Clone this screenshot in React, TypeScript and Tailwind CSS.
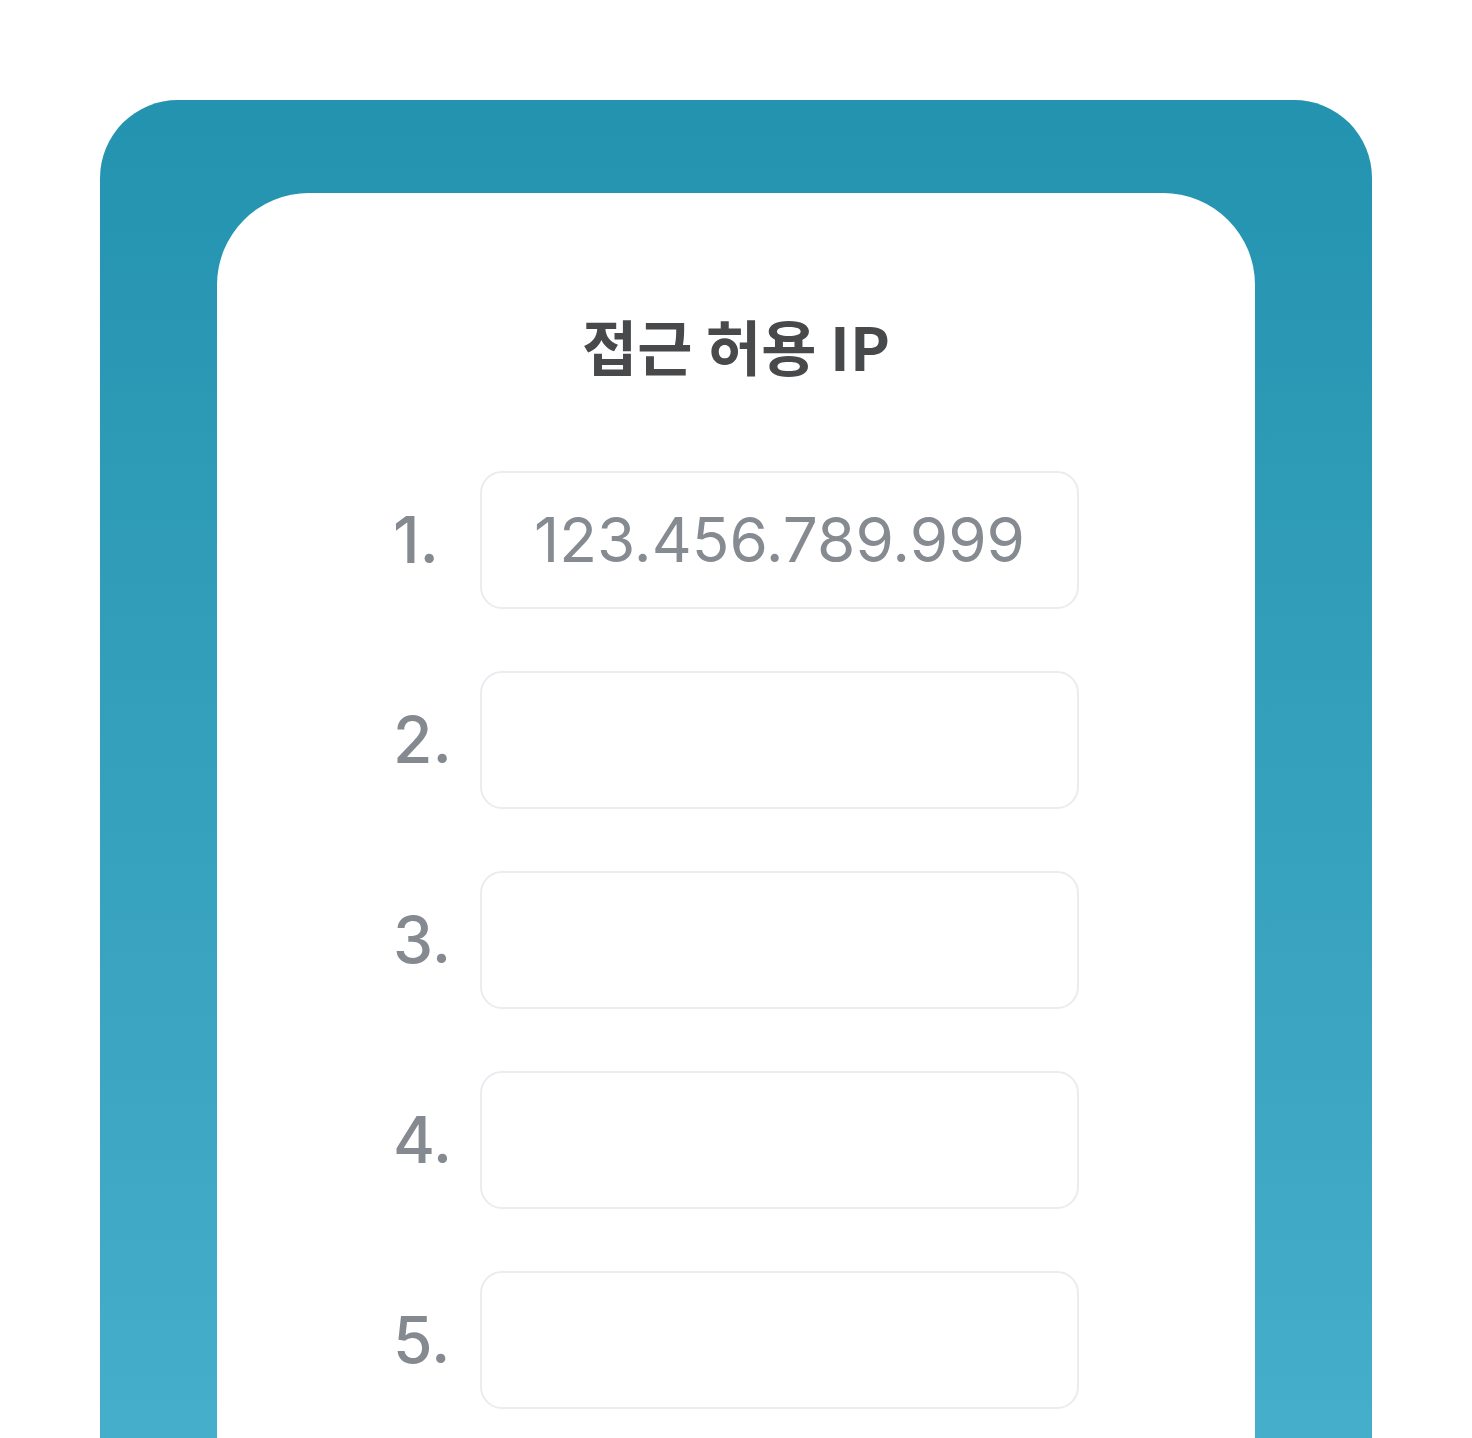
import React from "react";

const ips = ["123.456.789.999", "", "", "", ""];

export default function App() {
  return (
    <div className="h-[1438px] w-full overflow-hidden bg-white px-[100px] pt-[100px]">
      <div className="h-[1338px] rounded-t-[78px] bg-gradient-to-b from-[#2393af] to-[#45aeca] px-[117px] pt-[93px]">
        <div className="flex h-full flex-col items-center rounded-t-[92px] bg-white pt-[112px]">
          <h1
            className="text-[60px] font-bold leading-[80px] text-[#48494b]"
            style={{ fontFamily: "'Noto Sans CJK KR', 'Noto Sans', sans-serif" }}
          >
            접근 허용 IP
          </h1>
          <ul className="mt-[86px] flex flex-col gap-[62px]" style={{ fontFamily: "Inter, 'Noto Sans', sans-serif" }}>
            {ips.map((ip, idx) => (
              <li key={idx} className="flex items-center">
                <span className="w-[87px] text-[64px] font-medium leading-none text-[#858a91]">{idx + 1}.</span>
                <div className="flex h-[138px] w-[599px] items-center justify-center rounded-[22px] border-2 border-[#ebecf0] text-[62px] leading-none text-[#868b92]">
                  {ip}
                </div>
              </li>
            ))}
          </ul>
        </div>
      </div>
    </div>
  );
}
